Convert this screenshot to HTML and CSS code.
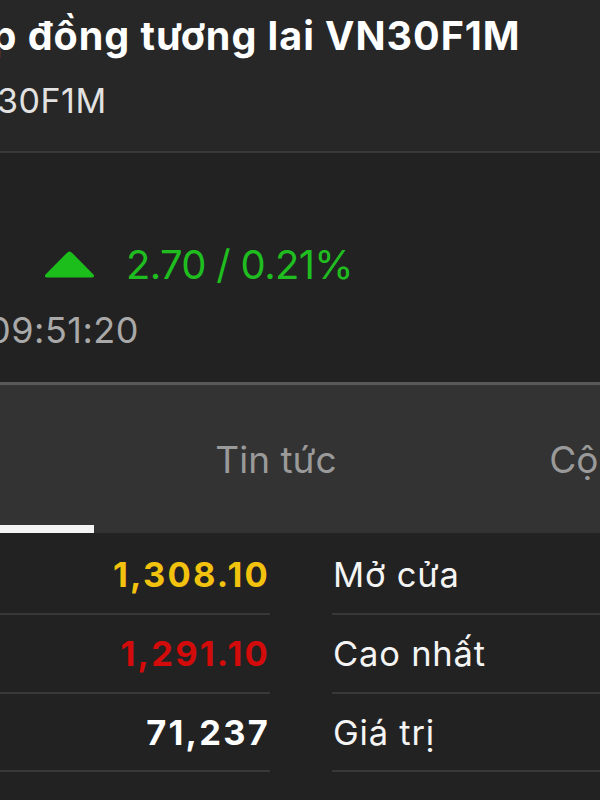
FILE: index.html
```html
<!DOCTYPE html>
<html lang="vi">
<head>
<meta charset="utf-8">
<title>VN30F1M</title>
<link rel="stylesheet" href="styles.css">
</head>
<body>
<div class="screen">
  <header class="head">
    <h1 class="title">Hợp đồng tương lai VN30F1M</h1>
    <div class="code">VN30F1M</div>
  </header>
  <section class="price">
    <div class="change">
      <svg class="tri" width="51" height="27" viewBox="0 0 51 27" aria-hidden="true">
        <path d="M22.6 2.2 Q25.5 -1 28.4 2.2 L49.2 23.2 Q51.6 26.5 47.5 26.5 L3.5 26.5 Q-0.6 26.5 1.8 23.2 Z" fill="#1cbe1c"/>
      </svg>
      <span class="delta">2.70 / 0.21%</span>
    </div>
    <div class="time">09:51:20</div>
  </section>
  <nav class="tabs">
    <div class="tab active">Giao dịch</div>
    <div class="tab">Tin tức</div>
    <div class="tab tab-wide">Cộng đồng</div>
  </nav>
  <section class="stats">
    <div class="val yellow">1,308.10</div><div class="lbl">Mở cửa</div>
    <div class="val red">1,291.10</div><div class="lbl">Cao nhất</div>
    <div class="val white">71,237</div><div class="lbl">Giá trị</div>
  </section>
</div>
</body>
</html>
```
FILE: styles.css
```css
html, body {
  margin: 0;
  padding: 0;
  background: #222222;
  overflow: hidden;
}
body {
  width: 600px;
  height: 800px;
  font-family: "Inter", "Liberation Sans", sans-serif;
  color: #ffffff;
}
.screen {
  display: flex;
  flex-direction: column;
}
.head {
  background: #272727;
  height: 138px;
  padding-top: 13px;
  border-bottom: 2px solid #393939;
  overflow: hidden;
}
.title {
  margin: 0 0 0 -64px;
  font-size: 39.5px;
  line-height: 46px;
  font-weight: 700;
  letter-spacing: 0.95px;
  white-space: nowrap;
  color: #ffffff;
}
.code {
  margin: 21px 0 0 -53px;
  font-size: 34px;
  line-height: 42px;
  letter-spacing: 0.5px;
  color: #e2e2e2;
  white-space: nowrap;
}
.price {
  height: 232px;
  padding-top: 88px;
  box-sizing: border-box;
  border-bottom: 3px solid #595959;
}
.change {
  display: flex;
  align-items: center;
  height: 48px;
}
.tri {
  margin-left: 44px;
  margin-top: -2px;
  flex: none;
}
.delta {
  margin-left: 31px;
  font-size: 40px;
  line-height: 48px;
  letter-spacing: -0.7px;
  color: #1fbd1f;
}
.time {
  margin: 19px 0 0 -12px;
  font-size: 36px;
  line-height: 44px;
  letter-spacing: 0.5px;
  color: #a9a9a9;
}
.tabs {
  display: flex;
  height: 148px;
  background: #333333;
  margin-left: -270px;
}
.tab {
  flex: none;
  width: 364px;
  display: flex;
  align-items: center;
  justify-content: center;
  font-size: 37px;
  color: #9a9a9a;
  white-space: nowrap;
}
.tab-wide {
  width: 376px;
}
.tab.active {
  box-shadow: inset 0 -8px 0 #f4f4f4;
  color: #ffffff;
}
.stats {
  display: grid;
  grid-template-columns: 270px 1fr;
  grid-template-rows: 82px 79px 78px;
  column-gap: 62px;
}
.stats > div {
  display: flex;
  align-items: center;
  border-bottom: 2px solid #383838;
  font-size: 34.5px;
  white-space: nowrap;
}
.stats > div:nth-child(1), .stats > div:nth-child(2) {
  padding-top: 2px;
}
.val {
  justify-content: flex-end;
  padding-right: 0;
  font-size: 35.5px;
  font-weight: 700;
  letter-spacing: 2.2px;
}
.lbl {
  padding-left: 1px;
  letter-spacing: 0.8px;
  color: #f4f4f4;
}
.yellow { color: #f2c20e; }
.red { color: #d40b0b; }
.white { color: #ffffff; }
```
